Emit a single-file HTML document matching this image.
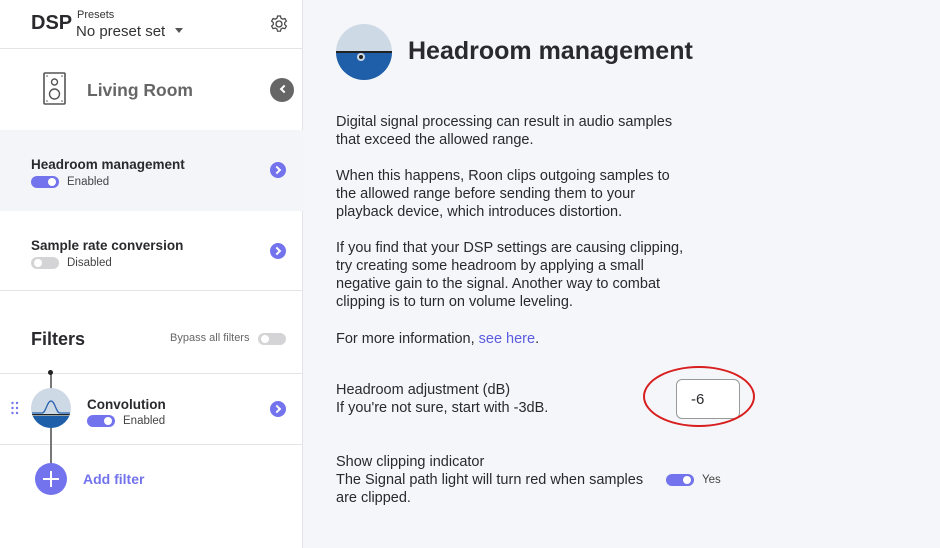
<!DOCTYPE html>
<html><head><meta charset="utf-8"><style>
*{box-sizing:border-box;margin:0;padding:0}
body{width:940px;height:548px;overflow:hidden;font-family:"Liberation Sans",sans-serif;background:#f5f6fa;color:#2a2a2e;position:relative}
.left{position:absolute;left:0;top:0;width:303px;height:548px;background:#fff;border-right:1px solid #e3e4e8}
.abs{position:absolute}
.hr{position:absolute;left:0;width:303px;height:1px;background:#e3e4e8}
.tog{position:absolute;width:28px;height:12px;border-radius:6px}
.tog::after{content:"";position:absolute;top:2px;width:8px;height:8px;border-radius:50%;background:#fff}
.on{background:#7373ee}.on::after{right:3px}
.off{background:#d4d4d6}.off::after{left:3px}
.chev{position:absolute;width:16px;height:16px;border-radius:50%;background:#7373ee}
.chev::after{content:"";position:absolute;left:4px;top:5px;width:4px;height:4px;border-top:2px solid #fff;border-right:2px solid #fff;transform:rotate(45deg)}
.p{position:absolute;left:336px;font-size:14.5px;line-height:18px;color:#2a2a2e}
.t{font-size:13.5px;font-weight:bold;color:#2a2a2e}
</style></head><body>
<div class="left">
 <div class="abs" style="left:31px;top:12px;font-size:20px;font-weight:bold">DSP</div>
 <div class="abs" style="left:77px;top:9px;font-size:11px;color:#333">Presets</div>
 <div class="abs" style="left:76px;top:23px;font-size:15px;color:#333">No preset set</div>
 <div class="abs" style="left:175px;top:28px;width:0;height:0;border-left:4px solid transparent;border-right:4px solid transparent;border-top:5px solid #555"></div>
 <svg class="abs" style="left:269px;top:14px" width="20" height="20" viewBox="0 0 20 20"><circle cx="10" cy="10" r="3" fill="none" stroke="#444" stroke-width="1.3"/><path d="M8.5 2h3l.5 2.2 1.7 1 2.2-.7 1.5 2.6-1.7 1.5v2l1.7 1.5-1.5 2.6-2.2-.7-1.7 1-.5 2.2h-3l-.5-2.2-1.7-1-2.2.7-1.5-2.6 1.7-1.5v-2L2.6 7.1l1.5-2.6 2.2.7 1.7-1z" fill="none" stroke="#444" stroke-width="1.2"/></svg>
 <div class="hr" style="top:48px"></div>
 <svg class="abs" style="left:43px;top:72px" width="24" height="34"><rect x="1" y="1" width="21" height="31" rx="1" fill="none" stroke="#555" stroke-width="1.6"/><circle cx="11.5" cy="10" r="3" fill="none" stroke="#555" stroke-width="1.4"/><circle cx="11.5" cy="22" r="5" fill="none" stroke="#555" stroke-width="1.4"/><circle cx="4" cy="4" r=".8" fill="#555"/><circle cx="19" cy="4" r=".8" fill="#555"/><circle cx="4" cy="29" r=".8" fill="#555"/><circle cx="19" cy="29" r=".8" fill="#555"/></svg>
 <div class="abs" style="left:87px;top:80px;font-size:17.5px;font-weight:bold;color:#666">Living Room</div>
 <div class="abs" style="left:270px;top:78px;width:24px;height:24px;border-radius:50%;background:#666"></div>
 <div class="abs" style="left:281px;top:86px;width:6px;height:6px;border-left:2px solid #fff;border-bottom:2px solid #fff;transform:rotate(45deg)"></div>
 <div class="abs" style="left:0;top:130px;width:303px;height:81px;background:#f4f5f9"></div>
 <div class="abs t" style="left:31px;top:157px">Headroom management</div>
 <div class="tog on" style="left:31px;top:176px"></div>
 <div class="abs" style="left:67px;top:176px;font-size:11.5px;color:#444">Enabled</div>
 <div class="chev" style="left:270px;top:162px"></div>
 <div class="abs t" style="left:31px;top:238px">Sample rate conversion</div>
 <div class="tog off" style="left:31px;top:257px"></div>
 <div class="abs" style="left:67px;top:257px;font-size:11.5px;color:#444">Disabled</div>
 <div class="chev" style="left:270px;top:243px"></div>
 <div class="hr" style="top:290px"></div>
 <div class="abs" style="left:31px;top:329px;font-size:18px;font-weight:bold">Filters</div>
 <div class="abs" style="left:170px;top:332px;font-size:11px;color:#666">Bypass all filters</div>
 <div class="tog off" style="left:258px;top:333px"></div>
 <div class="hr" style="top:373px"></div>
 <div class="hr" style="top:444px"></div>
 <div class="abs" style="left:50px;top:372px;width:2px;height:100px;background:#777"></div>
 <div class="abs" style="left:48px;top:370px;width:5px;height:5px;border-radius:50%;background:#222"></div>
 <svg class="abs" style="left:31px;top:388px" width="40" height="40" viewBox="0 0 40 40"><clipPath id="c"><circle cx="20" cy="20" r="20"/></clipPath><g clip-path="url(#c)"><rect width="40" height="40" fill="#ced9e6"/><rect y="28" width="40" height="12" fill="#1f5faa"/><rect y="26" width="40" height="1.3" fill="#222"/><path d="M1 25h10c4 0 5-12 9-12s5 12 9 12h10" fill="none" stroke="#2a65b0" stroke-width="1.3"/></g></svg>
 <svg class="abs" style="left:11px;top:401px" width="8" height="14"><g fill="#7373ee"><circle cx="1.5" cy="2" r="1.2"/><circle cx="6" cy="2" r="1.2"/><circle cx="1.5" cy="7" r="1.2"/><circle cx="6" cy="7" r="1.2"/><circle cx="1.5" cy="12" r="1.2"/><circle cx="6" cy="12" r="1.2"/></g></svg>
 <div class="abs t" style="left:87px;top:397px">Convolution</div>
 <div class="tog on" style="left:87px;top:415px"></div>
 <div class="abs" style="left:123px;top:415px;font-size:11.5px;color:#444">Enabled</div>
 <div class="chev" style="left:270px;top:401px"></div>
 <div class="abs" style="left:35px;top:463px;width:32px;height:32px;border-radius:50%;background:#7373ee"></div>
 <div class="abs" style="left:43px;top:478px;width:16px;height:2px;background:#fff"></div>
 <div class="abs" style="left:50px;top:471px;width:2px;height:16px;background:#fff"></div>
 <div class="abs" style="left:83px;top:471px;font-size:14px;font-weight:bold;color:#7373ee">Add filter</div>
</div>
<svg class="abs" style="left:336px;top:24px" width="56" height="56" viewBox="0 0 56 56"><clipPath id="d"><circle cx="28" cy="28" r="28"/></clipPath><g clip-path="url(#d)"><rect width="56" height="56" fill="#ced9e6"/><rect y="28" width="56" height="28" fill="#1f5faa"/><rect y="27" width="56" height="2" fill="#222"/><circle cx="25" cy="33" r="4" fill="#ced9e6"/><circle cx="25" cy="33" r="2" fill="#222"/></g></svg>
<div class="abs" style="left:408px;top:37px;font-size:25px;font-weight:bold;color:#2a2a2e">Headroom management</div>
<div class="p" style="top:113px">Digital signal processing can result in audio samples<br>that exceed the allowed range.</div>
<div class="p" style="top:167px">When this happens, Roon clips outgoing samples to<br>the allowed range before sending them to your<br>playback device, which introduces distortion.</div>
<div class="p" style="top:239px">If you find that your DSP settings are causing clipping,<br>try creating some headroom by applying a small<br>negative gain to the signal. Another way to combat<br>clipping is to turn on volume leveling.</div>
<div class="p" style="top:330px">For more information, <span style="color:#5b5be0">see here</span>.</div>
<div class="p" style="top:381px">Headroom adjustment (dB)<br>If you're not sure, start with -3dB.</div>
<div class="abs" style="left:676px;top:379px;width:64px;height:40px;background:#fff;border:1px solid #999;border-radius:6px;font-size:15px;padding:11px 0 0 14px">-6</div>
<div class="abs" style="left:643px;top:366px;width:112px;height:61px;border:2.5px solid #d81e1e;border-radius:50%"></div>
<div class="p" style="top:453px">Show clipping indicator<br>The Signal path light will turn red when samples<br>are clipped.</div>
<div class="tog on" style="left:666px;top:474px"></div>
<div class="abs" style="left:702px;top:474px;font-size:11.5px;color:#444">Yes</div>
</body></html>
